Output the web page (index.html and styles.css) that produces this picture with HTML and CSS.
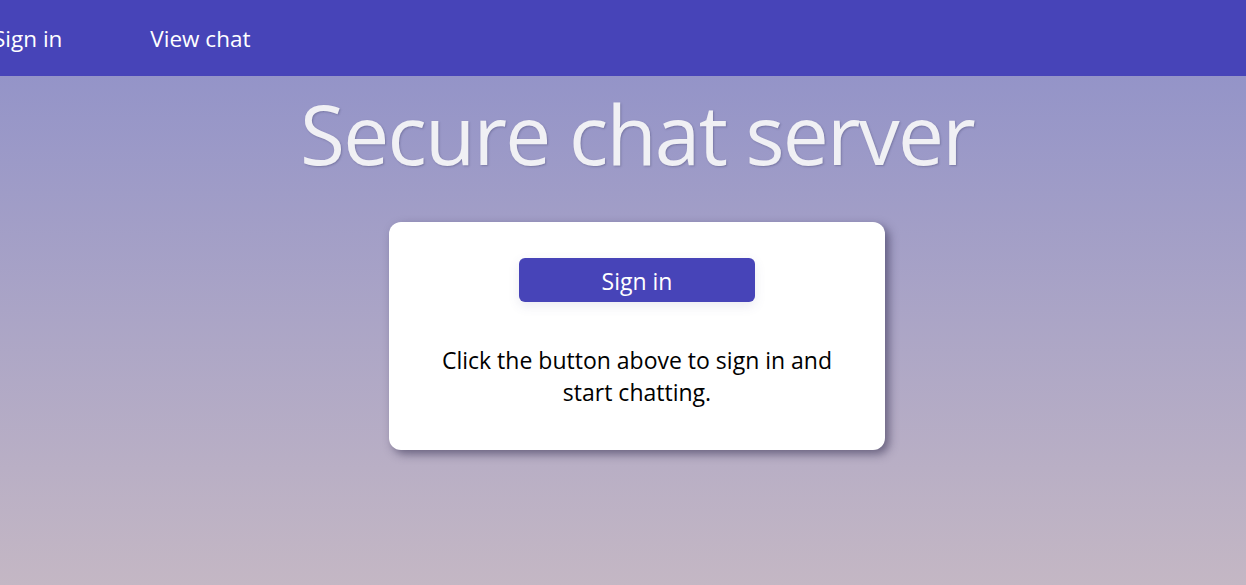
FILE: index.html
```html
<!DOCTYPE html>
<html lang="en">
<head>
<meta charset="utf-8">
<title>Secure chat server</title>
<link rel="stylesheet" href="styles.css">
</head>
<body>
<nav class="topnav">
  <a class="nav-item" href="#">Sign in</a>
  <a class="nav-item" href="#">View chat</a>
</nav>
<main class="page">
  <h1 class="title">Secure chat server</h1>
  <section class="card">
    <button class="btn" type="button">Sign in</button>
    <p class="hint">Click the button above to sign in and start chatting.</p>
  </section>
</main>
</body>
</html>
```

FILE: styles.css
```css
html, body {
  margin: 0;
  padding: 0;
}

body {
  min-height: 100vh;
  font-family: "Open Sans", "Noto Sans", "Liberation Sans", sans-serif;
  background: linear-gradient(to bottom, #4744b8 0, #4744b8 76px, #9494c8 76px, #c4b7c4 100%);
  overflow: hidden;
}

.topnav {
  display: flex;
  height: 76px;
  background: #4744b8;
  gap: 40px;
}

.nav-item {
  display: block;
  padding: 0 24px;
  line-height: 78px;
  font-size: 22.5px;
  color: #ffffff;
  text-decoration: none;
}

.nav-item:first-child {
  margin-left: -31px;
}

.page {
  display: flex;
  flex-direction: column;
  align-items: center;
  padding-left: 28px;
}

.title {
  margin: 4px 0 36px;
  font-size: 82px;
  line-height: 106px;
  font-weight: 400;
  color: #f0f0f4;
  text-shadow: 1px 1px 2px rgba(60, 60, 100, 0.35);
  letter-spacing: -1.8px;
}

.card {
  box-sizing: border-box;
  width: 496px;
  height: 228px;
  padding: 36px 30px 0;
  background: #ffffff;
  border-radius: 12px;
  box-shadow: 4px 4px 10px rgba(40, 35, 70, 0.55);
  display: flex;
  flex-direction: column;
  align-items: center;
}

.btn {
  width: 236px;
  height: 44px;
  border: 0;
  border-radius: 6px;
  background: #4744b8;
  color: #ffffff;
  font-family: inherit;
  font-size: 23px;
  padding: 2px 0 0;
  box-shadow: 0 4px 12px rgba(80, 80, 140, 0.12);
  cursor: pointer;
}

.hint {
  margin: 42px 0 0;
  width: 420px;
  text-align: center;
  font-size: 23px;
  line-height: 32px;
  color: #000000;
}
```
